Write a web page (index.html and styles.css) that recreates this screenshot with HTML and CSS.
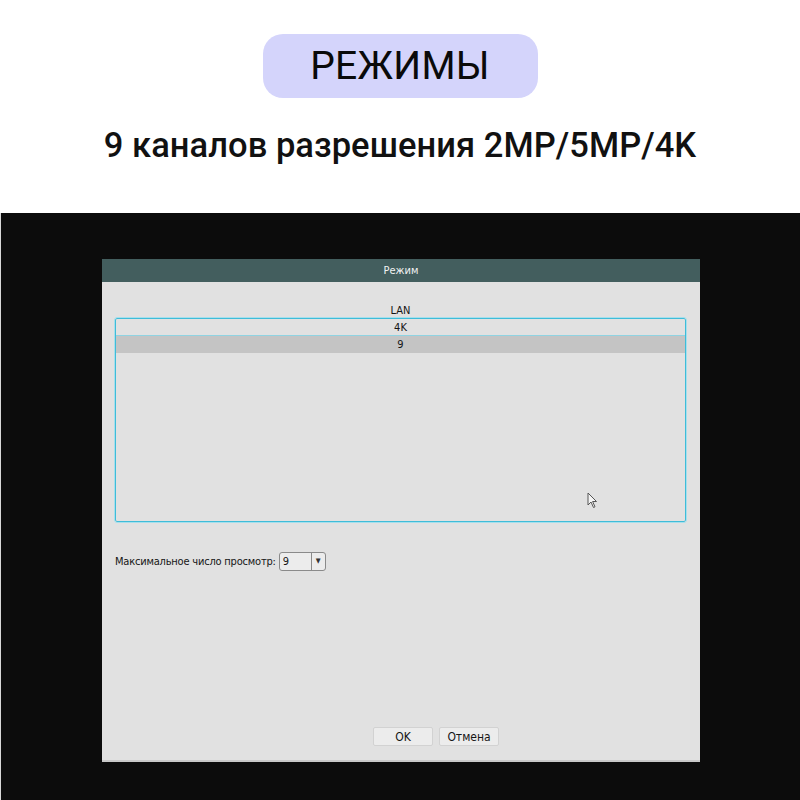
FILE: index.html
```html
<!DOCTYPE html>
<html lang="ru">
<head>
<meta charset="utf-8">
<link rel="stylesheet" href="styles.css">
</head>
<body>
<header class="top">
  <div class="pill">РЕЖИМЫ</div>
  <h1 class="subtitle">9 каналов разрешения 2MP/5MP/4K</h1>
</header>
<section class="screen">
  <div class="dialog">
    <div class="dialog-head">Режим</div>
    <div class="dialog-body">
      <div class="lan">LAN</div>
      <div class="list">
        <div class="row row-first">4K</div>
        <div class="row row-sel">9</div>
      </div>
      <div class="field">
        <span class="field-label">Максимальное число просмотр:</span>
        <span class="select"><span class="select-val">9</span><span class="select-btn">▼</span></span>
      </div>
      <div class="spacer"></div>
      <div class="buttons">
        <span class="btn">OK</span>
        <span class="btn">Отмена</span>
      </div>
    </div>
    <svg class="cursor" width="12" height="18" viewBox="0 0 12 18"><path d="M1 1 L1 13 L4 10 L6.5 15.5 L8 14.8 L5.6 9.5 L9.5 9.5 Z" fill="#f4f4f4" stroke="#555" stroke-width="1"/></svg>
  </div>
</section>
</body>
</html>
```

FILE: styles.css
```css
html, body {
  margin: 0;
  padding: 0;
  background: #ffffff;
}
body {
  width: 800px;
  height: 800px;
  overflow: hidden;
  font-family: Roboto, "Liberation Sans", sans-serif;
}
.top {
  height: 213px;
  display: flex;
  flex-direction: column;
  align-items: center;
  box-sizing: border-box;
  padding-top: 34px;
}
.pill {
  width: 275px;
  height: 64px;
  border-radius: 20px;
  background: #d4d4fb;
  color: #0a0a0a;
  font-size: 39px;
  line-height: 64px;
  text-align: center;
  letter-spacing: 0.3px;
}
.subtitle {
  margin: 17px 0 0 0;
  font-size: 34.5px;
  font-weight: 500;
  color: #111;
  line-height: 60px;
  letter-spacing: 0.05px;
}
.screen {
  height: 587px;
  background: #0c0c0c;
  box-sizing: border-box;
  padding: 46px 0 0 101px;
  border-left: 1px solid #d8d8d8;
}
.dialog {
  position: relative;
  width: 598px;
  height: 503px;
  background: #e1e1e1;
  border-bottom: 2px solid #c9c9c9;
  box-sizing: border-box;
  display: flex;
  flex-direction: column;
  font-family: "DejaVu Sans Condensed", "Liberation Sans", sans-serif;
  font-size: 11px;
  color: #151515;
}
.dialog-head {
  height: 23px;
  background: #435e5e;
  color: #f2f2f2;
  text-align: center;
  line-height: 24px;
  font-size: 11px;
}
.dialog-body {
  flex: 1;
  display: flex;
  flex-direction: column;
  padding: 0 14px 0 13px;
}
.lan {
  margin-top: 21px;
  height: 15px;
  line-height: 15px;
  text-align: center;
}
.list {
  height: 204px;
  box-sizing: border-box;
  border: 1px solid #3fbcd8;
  border-radius: 2px;
  outline: 1px solid #a6dfec;
}
.row {
  height: 17px;
  line-height: 17px;
  text-align: center;
}
.row-first {
  height: 16px;
  line-height: 17px;
  border-bottom: 1px solid #8fd3e2;
}
.row-sel {
  background: #c4c4c4;
}
.field {
  margin-top: 30px;
  display: flex;
  align-items: center;
  height: 19px;
}
.field-label {
  margin-right: 3px;
  letter-spacing: -0.2px;
}
.select {
  display: inline-flex;
  width: 47px;
  height: 19px;
  box-sizing: border-box;
  border: 1px solid #8a8a8a;
  border-radius: 3px;
  background: #ececec;
}
.select-val {
  flex: 1;
  line-height: 17px;
  padding-left: 3px;
  border-right: 1px solid #8a8a8a;
}
.select-btn {
  width: 13px;
  font-size: 7px;
  line-height: 17px;
  text-align: center;
  color: #333;
}
.spacer {
  flex: 1;
}
.buttons {
  display: flex;
  gap: 6px;
  padding-left: 258px;
  margin-bottom: 14px;
}
.btn {
  width: 60px;
  height: 19px;
  box-sizing: border-box;
  border: 1px solid #d2d2d2;
  border-radius: 2px;
  background: #ececec;
  text-align: center;
  line-height: 18px;
  font-size: 12px;
}
.cursor {
  position: absolute;
  left: 485px;
  top: 233px;
}
```
